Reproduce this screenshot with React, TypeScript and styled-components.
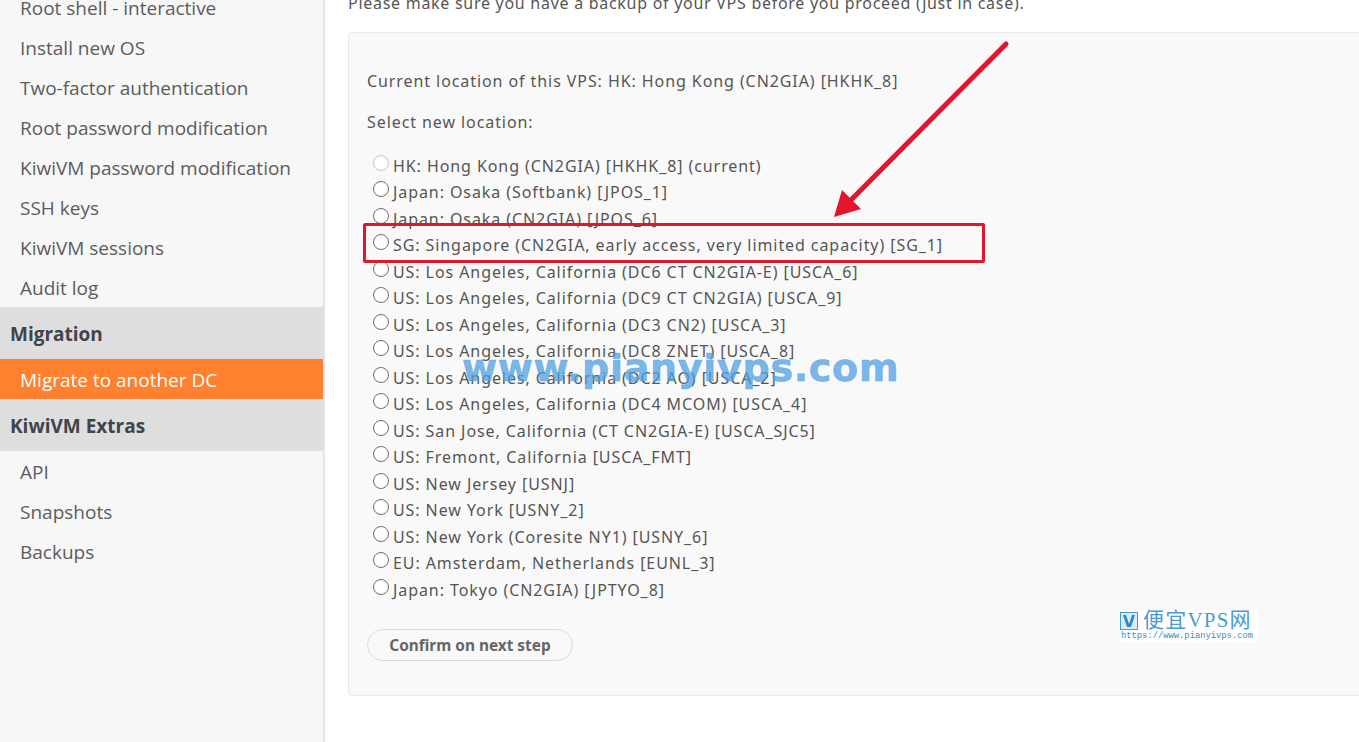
import styled, { createGlobalStyle } from 'styled-components';

const GlobalStyle = createGlobalStyle`
  html, body {
    margin: 0;
    padding: 0;
    height: 100%;
    overflow: hidden;
    background: #fff;
  }
`;

const Page = styled.div`
  position: relative;
  display: flex;
  width: 1359px;
  height: 742px;
  overflow: hidden;
  font-family: 'Open Sans', 'Liberation Sans', sans-serif;
  color: #555;
`;

const Sidebar = styled.aside`
  flex: none;
  width: 323px;
  height: 755px;
  padding-top: 7px;
  margin-top: -20px;
  background: #f7f7f7;
  border-right: 2px solid #e4e4e4;
`;

const MenuItem = styled.div<{ $active?: boolean }>`
  height: 40px;
  line-height: 42px;
  padding-left: 20px;
  font-size: 19px;
  color: ${({ $active }) => ($active ? '#fff' : '#5c5c5c')};
  background: ${({ $active }) => ($active ? '#ff802f' : 'transparent')};
`;

const MenuHeading = styled.div`
  height: 52px;
  line-height: 54px;
  padding-left: 10px;
  font-size: 19px;
  font-weight: 700;
  color: #40444b;
  background: #dedede;
`;

const Main = styled.main`
  flex: 1;
  min-width: 0;
  padding-left: 23px;
`;

const Notice = styled.p`
  margin: -9px 0 1px;
  height: 40px;
  line-height: 24px;
  font-family: 'Noto Sans', sans-serif;
  font-size: 16px;
  letter-spacing: 0.72px;
  white-space: nowrap;
`;

const Panel = styled.section`
  width: 1100px;
  height: 664px;
  box-sizing: border-box;
  padding: 35px 18px 0;
  background: #f9f9f9;
  border: 1px solid #eaeaea;
  border-radius: 4px;
  font-family: 'Noto Sans', sans-serif;
  font-size: 16px;
  letter-spacing: 0.92px;
  line-height: 26.5px;
`;

const Line = styled.p`
  margin: 0 0 14.5px;
`;

const Options = styled.div`
  margin-top: 17px;
`;

const Option = styled.label`
  display: flex;
  align-items: center;
  height: 26.5px;
  white-space: nowrap;
`;

const Radio = styled.span<{ $disabled?: boolean }>`
  flex: none;
  width: 14px;
  height: 14px;
  margin: -6px 4px 0 6px;
  border: 1px solid ${({ $disabled }) => ($disabled ? '#c4c4c4' : '#6e6e6e')};
  border-radius: 50%;
  background: #fff;
`;

const ConfirmButton = styled.button`
  display: block;
  width: 206px;
  height: 32px;
  margin-top: 25.5px;
  padding: 2px 0 0;
  background: #f9f9f9;
  border: 1px solid #dcdcdc;
  border-radius: 16px;
  font-family: 'Noto Sans', sans-serif;
  font-size: 15.4px;
  font-weight: 700;
  color: #666;
`;

const Highlight = styled.div`
  position: absolute;
  left: 363px;
  top: 223px;
  width: 622px;
  height: 40px;
  box-sizing: border-box;
  border: 3px solid #e3152c;
  border-radius: 2px;
`;

const ArrowSvg = styled.svg`
  position: absolute;
  left: 820px;
  top: 30px;
`;

const Watermark = styled.div`
  position: absolute;
  left: 462px;
  top: 344px;
  font-family: 'DejaVu Sans', sans-serif;
  font-size: 38px;
  font-weight: 700;
  line-height: 48px;
  letter-spacing: 0.7px;
  color: rgba(80, 160, 225, 0.75);
  -webkit-text-stroke: 0.6px rgba(80, 160, 225, 0.75);
  white-space: nowrap;
`;

const LogoBox = styled.div`
  position: absolute;
  left: 1120px;
  top: 610px;
  width: 138px;
  height: 32px;
  background: #fff;
  color: #4a9ad4;
`;

const LogoTop = styled.div`
  display: flex;
  align-items: center;
  gap: 5px;
  height: 21px;
  font-family: 'Liberation Serif', 'Noto Sans CJK SC', serif;
  font-size: 21px;
  line-height: 21px;
  letter-spacing: 1.2px;
  white-space: nowrap;
`;

const LogoUrl = styled.div`
  padding-left: 1px;
  font-family: 'Liberation Mono', monospace;
  font-size: 8.8px;
  line-height: 10px;
  color: #3c8ac4;
  white-space: nowrap;
`;

const locations = [
  'HK: Hong Kong (CN2GIA) [HKHK_8] (current)',
  'Japan: Osaka (Softbank) [JPOS_1]',
  'Japan: Osaka (CN2GIA) [JPOS_6]',
  'SG: Singapore (CN2GIA, early access, very limited capacity) [SG_1]',
  'US: Los Angeles, California (DC6 CT CN2GIA-E) [USCA_6]',
  'US: Los Angeles, California (DC9 CT CN2GIA) [USCA_9]',
  'US: Los Angeles, California (DC3 CN2) [USCA_3]',
  'US: Los Angeles, California (DC8 ZNET) [USCA_8]',
  'US: Los Angeles, California (DC2 AO) [USCA_2]',
  'US: Los Angeles, California (DC4 MCOM) [USCA_4]',
  'US: San Jose, California (CT CN2GIA-E) [USCA_SJC5]',
  'US: Fremont, California [USCA_FMT]',
  'US: New Jersey [USNJ]',
  'US: New York [USNY_2]',
  'US: New York (Coresite NY1) [USNY_6]',
  'EU: Amsterdam, Netherlands [EUNL_3]',
  'Japan: Tokyo (CN2GIA) [JPTYO_8]',
];

const accountItems = [
  'Root shell - interactive',
  'Install new OS',
  'Two-factor authentication',
  'Root password modification',
  'KiwiVM password modification',
  'SSH keys',
  'KiwiVM sessions',
  'Audit log',
];

const App = () => {
  return (
    <Page>
      <GlobalStyle />
      <Sidebar>
        {accountItems.map((item) => (
          <MenuItem key={item}>{item}</MenuItem>
        ))}
        <MenuHeading>Migration</MenuHeading>
        <MenuItem $active>Migrate to another DC</MenuItem>
        <MenuHeading>KiwiVM Extras</MenuHeading>
        <MenuItem>API</MenuItem>
        <MenuItem>Snapshots</MenuItem>
        <MenuItem>Backups</MenuItem>
      </Sidebar>
      <Main>
        <Notice>Please make sure you have a backup of your VPS before you proceed (just in case).</Notice>
        <Panel>
          <Line>Current location of this VPS: HK: Hong Kong (CN2GIA) [HKHK_8]</Line>
          <Line>Select new location:</Line>
          <Options>
            {locations.map((loc, i) => (
              <Option key={loc}>
                <Radio $disabled={i === 0} />
                {loc}
              </Option>
            ))}
          </Options>
          <ConfirmButton>Confirm on next step</ConfirmButton>
        </Panel>
      </Main>
      <Highlight />
      <ArrowSvg width="200" height="200" viewBox="0 0 200 200">
        <path d="M186 14 L24 177" stroke="#e3152c" strokeWidth="5" strokeLinecap="round" />
        <path d="M14 187 L22 160 L41 179 Z" fill="#e3152c" />
      </ArrowSvg>
      <Watermark>www.pianyivps.com</Watermark>
      <LogoBox>
        <LogoTop>
          <svg width="18" height="18" viewBox="0 0 18 18">
            <rect x="0.5" y="0.5" width="17" height="17" fill="#d8ecf9" stroke="#4a9ad4" />
            <path d="M3 3 L7 15 L11 15 L15 3 L12 3 L9 12 L6 3 Z" fill="#2f8acb" />
          </svg>
          便宜VPS网
        </LogoTop>
        <LogoUrl>https://www.pianyivps.com</LogoUrl>
      </LogoBox>
    </Page>
  );
};

export default App;
